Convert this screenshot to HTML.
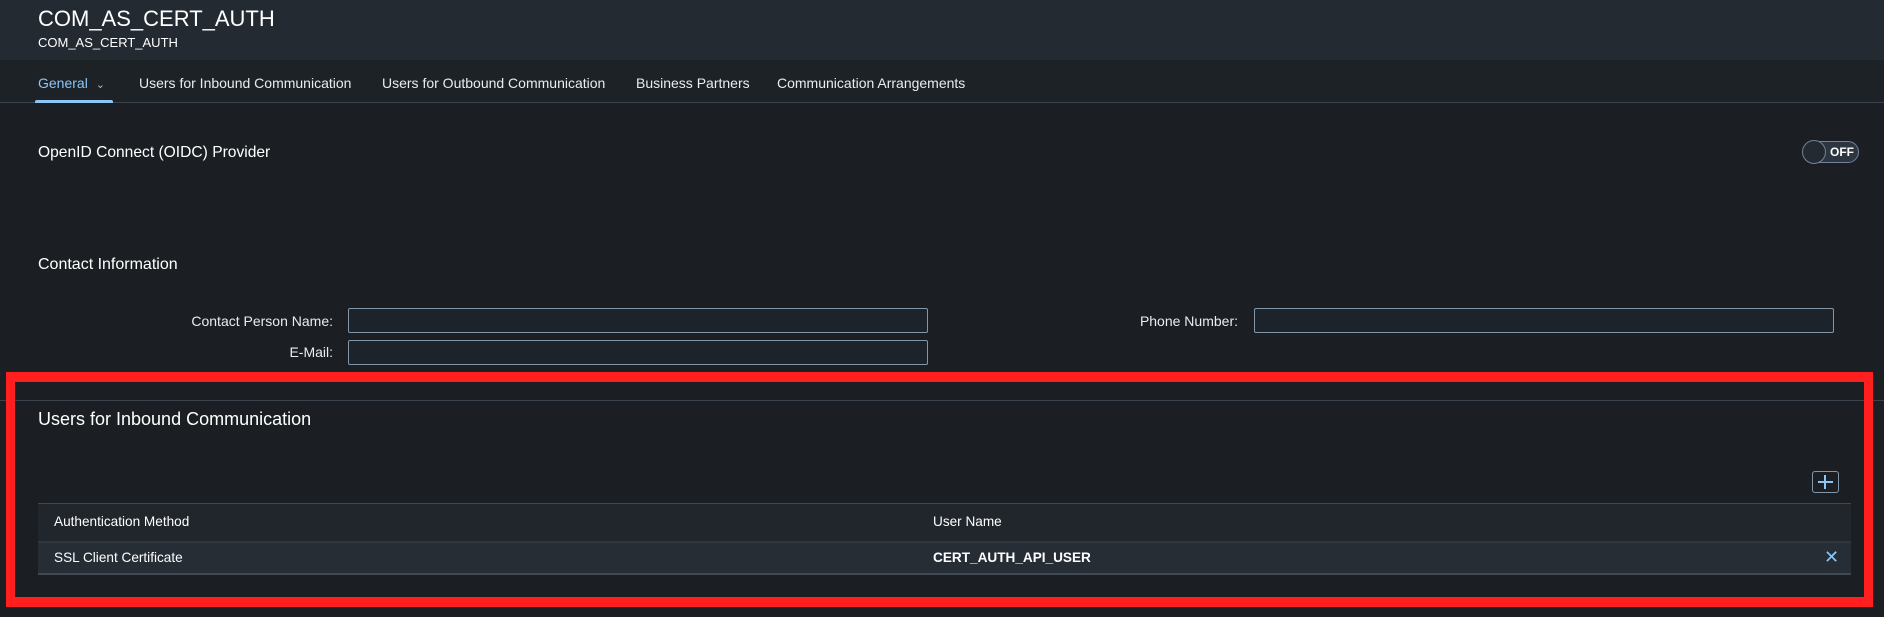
<!DOCTYPE html>
<html><head><meta charset="utf-8"><style>
*{margin:0;padding:0;box-sizing:border-box}
body{width:1884px;height:617px;background:#1b1f23;font-family:"Liberation Sans",sans-serif;color:#fff;position:relative;overflow:hidden}
.a{position:absolute;white-space:nowrap}
.hdr{position:absolute;left:0;top:0;width:1884px;height:60px;background:#232a32}
.tabs{position:absolute;left:0;top:60px;width:1884px;height:43px;background:#1d2227;border-bottom:1px solid #3a434d}
.tab{position:absolute;top:15px;font-size:14px;color:#eaecee}
.lbl{position:absolute;font-size:14px;color:#eaecee;text-align:right}
.inp{position:absolute;height:25px;border:1px solid #8396a8;background:#1d232a;border-radius:2px}
</style></head><body>
<div class="hdr"></div>
<div class="a" style="left:38px;top:6px;font-size:22px">COM_AS_CERT_AUTH</div>
<div class="a" style="left:38px;top:35px;font-size:13px">COM_AS_CERT_AUTH</div>
<div class="tabs">
<div class="tab" style="left:38px;color:#8cc6f7">General <span style="font-size:11px;margin-left:4px">&#8964;</span></div>
<div class="tab" style="left:139px">Users for Inbound Communication</div>
<div class="tab" style="left:382px">Users for Outbound Communication</div>
<div class="tab" style="left:636px">Business Partners</div>
<div class="tab" style="left:777px">Communication Arrangements</div>
<div style="position:absolute;left:35px;top:40px;width:78px;height:3px;background:#8cc6f7;border-radius:2px 2px 0 0"></div>
</div>
<div class="a" style="left:38px;top:144px;font-size:15.6px">OpenID Connect (OIDC) Provider</div>
<div style="position:absolute;left:1808px;top:141px;width:51px;height:22px;border:1px solid #72839a;border-radius:11px;background:#2c3540"></div>
<div style="position:absolute;left:1802px;top:140px;width:24px;height:24px;border:1px solid #72839a;border-radius:50%;background:#232a32"></div>
<div class="a" style="left:1830px;top:145px;font-size:12px;font-weight:bold">OFF</div>
<div class="a" style="left:38px;top:256px;font-size:16px">Contact Information</div>
<div class="lbl" style="right:1551px;top:313px">Contact Person Name:</div>
<div class="inp" style="left:348px;top:308px;width:580px"></div>
<div class="lbl" style="right:1551px;top:344px">E-Mail:</div>
<div class="inp" style="left:348px;top:340px;width:580px"></div>
<div class="lbl" style="right:646px;top:313px">Phone Number:</div>
<div class="inp" style="left:1254px;top:308px;width:580px"></div>
<div style="position:absolute;left:0;top:400px;width:1884px;height:1px;background:#3a434d"></div>
<div class="a" style="left:38px;top:409px;font-size:18px">Users for Inbound Communication</div>
<div style="position:absolute;left:1812px;top:471px;width:27px;height:22px;border:1px solid #8396a8;border-radius:3px"></div>
<div style="position:absolute;left:1818px;top:481px;width:15px;height:2px;background:#8cc6f7"></div>
<div style="position:absolute;left:1824px;top:475px;width:2px;height:14px;background:#8cc6f7"></div>
<div style="position:absolute;left:38px;top:503px;width:1813px;height:38px;background:#20262c;border-top:1px solid #3f4853"></div>
<div style="position:absolute;left:38px;top:541px;width:1813px;height:34px;background:#262d35;border-top:2px solid #2f3741;border-bottom:2px solid #3f4853"></div>
<div class="a" style="left:54px;top:514px;font-size:13.6px">Authentication Method</div>
<div class="a" style="left:933px;top:514px;font-size:13.6px">User Name</div>
<div class="a" style="left:54px;top:550px;font-size:13.6px">SSL Client Certificate</div>
<div class="a" style="left:933px;top:550px;font-size:13.6px;font-weight:bold">CERT_AUTH_API_USER</div>
<div class="a" style="left:1824px;top:547px;font-size:18px;color:#8cc6f7">&#x2715;</div>
<div style="position:absolute;left:6px;top:372px;width:1867px;height:235px;border:9px solid #ff1f1f;border-top-width:10px;border-bottom-width:10px"></div>
</body></html>
